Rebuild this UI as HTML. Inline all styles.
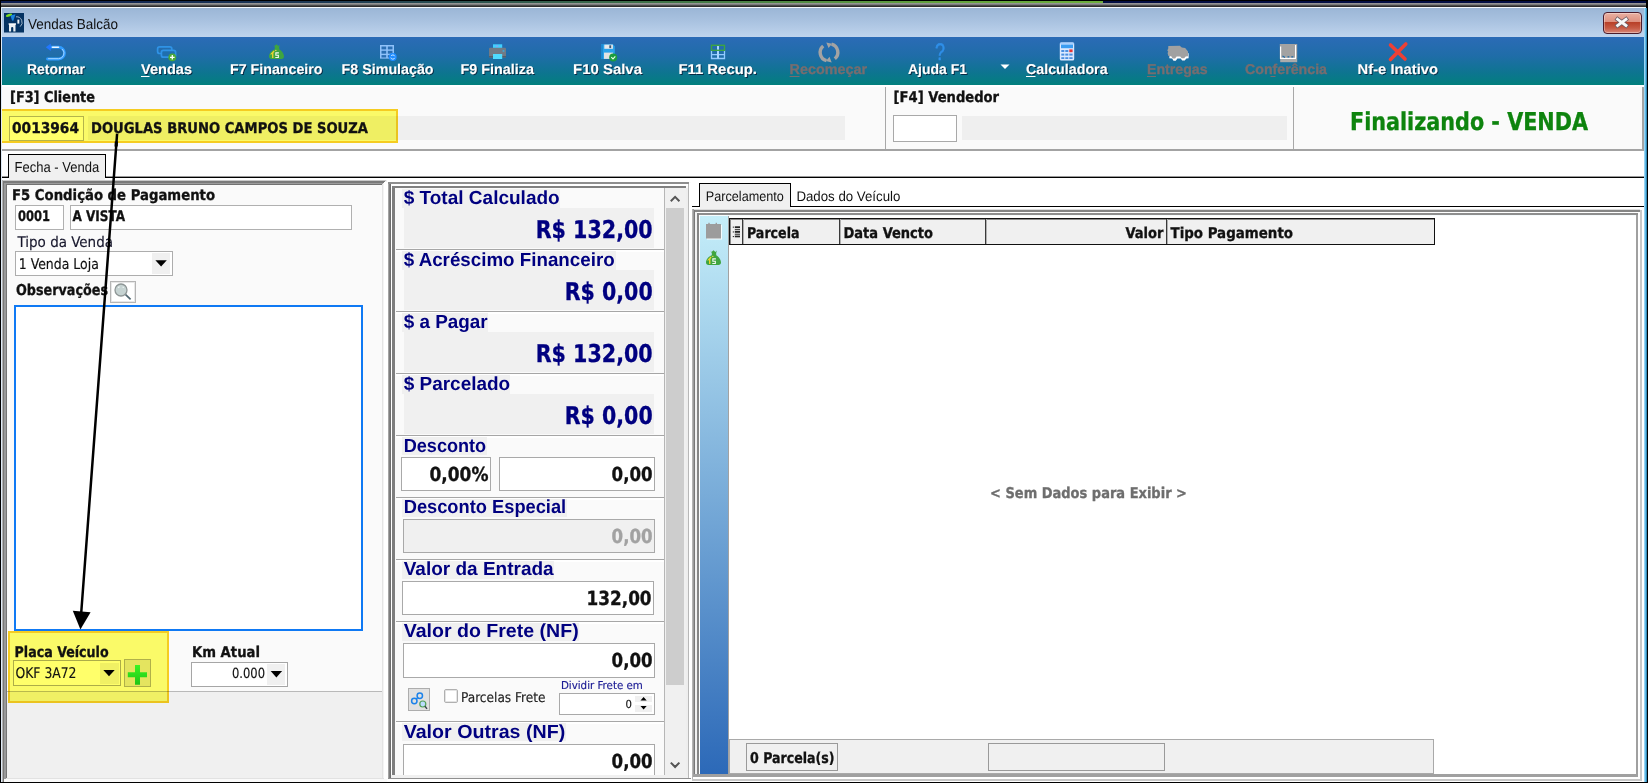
<!DOCTYPE html>
<html lang="pt-BR"><head><meta charset="utf-8"><title>Vendas Balcão</title>
<style>
html,body{margin:0;padding:0;background:#fff;overflow:hidden}
#win{position:relative;width:1648px;height:783px;overflow:hidden;background:#fff;font-family:"Liberation Sans",sans-serif}
#win div{position:absolute;box-sizing:border-box}
#ov{position:absolute;left:0;top:0}
</style></head><body>
<div id="win">
<div style="left:0px;top:0px;width:1648px;height:783px;background:#fff;"></div>
<div style="left:0px;top:0px;width:1648px;height:1px;background:#000;"></div>
<div style="left:0px;top:1px;width:1648px;height:2px;background:#030e44;"></div>
<div style="left:0px;top:1px;width:1103px;height:2px;background:linear-gradient(90deg,#0b1c52,#1d3a55 30%,#3f7448 60%,#62a23d 85%,#6cae3c);"></div>
<div style="left:0px;top:3px;width:1648px;height:1px;background:#949494;"></div>
<div style="left:0px;top:4px;width:1648px;height:1px;background:#7c7c7c;"></div>
<div style="left:0px;top:5px;width:1648px;height:1px;background:#4a4a4a;"></div>
<div style="left:0px;top:6px;width:1648px;height:1px;background:#2e2e2e;"></div>
<div style="left:0px;top:7px;width:1648px;height:1px;background:#f4f8fc;"></div>
<div style="left:2px;top:8px;width:1644px;height:29px;background:linear-gradient(#9bb6d6,#a9c2e0 45%,#bfd4ed);"></div>
<div style="left:2px;top:37px;width:1642px;height:48px;background:linear-gradient(#2b6bb6,#1f6da8 40%,#0d7590 75%,#027f7d);"></div>
<div style="left:0px;top:0px;width:1px;height:783px;background:#000;"></div>
<div style="left:1px;top:7px;width:1px;height:783px;background:#dfeaf6;"></div>
<div style="left:1644px;top:8px;width:1px;height:783px;background:#9ad4f2;"></div>
<div style="left:1645px;top:8px;width:1px;height:783px;background:#5fbbe8;"></div>
<div style="left:1646px;top:8px;width:1px;height:783px;background:#3588b4;"></div>
<div style="left:1647px;top:0px;width:1px;height:783px;background:#000;"></div>
<div style="left:1646px;top:0px;width:2px;height:8px;background:#000;"></div>
<div style="left:1603px;top:12px;width:39px;height:22px;background:linear-gradient(#eab0a2,#dd8f7e 45%,#b83f27 46%,#c65a44 75%,#d9887a);border:1px solid #4b1c2c;border-radius:4px;box-shadow:inset 0 0 0 1px rgba(255,255,255,.35);"></div>
<div style="left:2px;top:85px;width:1642px;height:64px;background:#fafafa;"></div>
<div style="left:2px;top:149px;width:1642px;height:2px;background:#a3a3a3;"></div>
<div style="left:885px;top:86px;width:1px;height:63px;background:#a8a8a8;"></div>
<div style="left:1293px;top:86px;width:1px;height:63px;background:#a8a8a8;"></div>
<div style="left:1642px;top:87px;width:2px;height:62px;background:#a4a4a4;"></div>
<div style="left:2px;top:85px;width:1642px;height:2px;background:#fff;"></div>
<div style="left:9px;top:116px;width:75px;height:25px;background:#fff;border:1px solid #b4b4b4;"></div>
<div style="left:88px;top:116px;width:757px;height:24px;background:#efefef;"></div>
<div style="left:893px;top:115px;width:64px;height:27px;background:#fff;border:1px solid #a9a9a9;"></div>
<div style="left:962px;top:116px;width:325px;height:24px;background:#efefef;"></div>
<div style="left:2px;top:176px;width:1642px;height:1px;background:#9a9a9a;"></div>
<div style="left:2px;top:177px;width:1642px;height:1px;background:#000;"></div>
<div style="left:2px;top:178px;width:1642px;height:604px;background:#fff;"></div>
<div style="left:8px;top:154px;width:98px;height:24px;background:#f0f0f0;border:1px solid #000;border-bottom:none;"></div>
<div style="left:9px;top:178px;width:96px;height:2px;background:#f0f0f0;"></div>
<div style="left:2px;top:180px;width:385px;height:602px;background:#f0f0f0;"></div>
<div style="left:2px;top:180px;width:384px;height:1px;background:#c8c8c8;"></div>
<div style="left:3px;top:181px;width:382px;height:2px;background:#7a7a7a;"></div>
<div style="left:4px;top:183px;width:380px;height:1px;background:#9c9c9c;"></div>
<div style="left:6px;top:184px;width:377px;height:1px;background:#727272;"></div>
<div style="left:2px;top:180px;width:1px;height:602px;background:#b4b4b4;"></div>
<div style="left:3px;top:181px;width:1px;height:601px;background:#787878;"></div>
<div style="left:4px;top:183px;width:2px;height:599px;background:#9a9a9a;"></div>
<div style="left:6px;top:184px;width:1px;height:598px;background:#767676;"></div>
<div style="left:382px;top:184px;width:1px;height:595px;background:#e4e4e4;"></div>
<div style="left:383px;top:183px;width:1px;height:596px;background:#f4f4f4;"></div>
<div style="left:384px;top:182px;width:3px;height:598px;background:#fff;"></div>
<div style="left:6px;top:778px;width:378px;height:1px;background:#e2e2e2;"></div>
<div style="left:4px;top:779px;width:383px;height:3px;background:#fafafa;"></div>
<div style="left:7px;top:185px;width:375px;height:506px;background:#fafafa;"></div>
<div style="left:7px;top:691px;width:375px;height:1px;background:#b9b9b9;"></div>
<div style="left:15px;top:205px;width:49px;height:25px;background:#fff;border:1px solid #b0b0b0;"></div>
<div style="left:70px;top:205px;width:282px;height:25px;background:#fff;border:1px solid #b0b0b0;"></div>
<div style="left:15px;top:251px;width:158px;height:25px;background:#fff;border:1px solid #adadad;"></div>
<div style="left:152px;top:253px;width:18px;height:21px;background:#f0f0f0;"></div>
<div style="left:110px;top:281px;width:26px;height:22px;background:#f0f0f0;border:1px solid #b5b5b5;"></div>
<div style="left:14px;top:305px;width:349px;height:326px;background:#fff;border:2px solid #0f79f4;"></div>
<div style="left:13px;top:660px;width:108px;height:26px;background:#fff;border:1px solid #adadad;"></div>
<div style="left:100px;top:663px;width:19px;height:21px;background:#f0f0f0;"></div>
<div style="left:124px;top:659px;width:27px;height:28px;background:#e4e4e4;border:1px solid #b0b0b0;"></div>
<div style="left:191px;top:662px;width:97px;height:25px;background:#fff;border:1px solid #a6a6a6;"></div>
<div style="left:267px;top:664px;width:18px;height:21px;background:#f0f0f0;"></div>
<div style="left:388px;top:182px;width:303px;height:597px;background:#fafafa;"></div>
<div style="left:388px;top:182px;width:1px;height:597px;background:#a4a4a4;"></div>
<div style="left:389px;top:182px;width:1px;height:597px;background:#7e7e7e;"></div>
<div style="left:390px;top:182px;width:1px;height:596px;background:#6e6e6e;"></div>
<div style="left:388px;top:182px;width:301px;height:2px;background:#8e8e8e;"></div>
<div style="left:688px;top:184px;width:1px;height:594px;background:#b8b8b8;"></div>
<div style="left:689px;top:183px;width:2px;height:596px;background:#fff;"></div>
<div style="left:388px;top:778px;width:303px;height:1px;background:#8f8f8f;"></div>
<div style="left:391px;top:184px;width:297px;height:594px;background:#fff;"></div>
<div style="left:392px;top:186px;width:296px;height:590px;background:#fafafa;"></div>
<div style="left:392px;top:186px;width:3px;height:590px;background:#7e7e7e;"></div>
<div style="left:392px;top:186px;width:294px;height:2px;background:#808080;"></div>
<div style="left:686px;top:188px;width:2px;height:588px;background:#eeeeee;"></div>
<div style="left:391px;top:775px;width:297px;height:3px;background:#f0f0f0;"></div>
<div style="left:665px;top:188px;width:21px;height:587px;background:#f0f0f0;"></div>
<div style="left:666px;top:208px;width:18px;height:477px;background:#cdcdcd;"></div>
<div style="left:396px;top:249px;width:268px;height:1px;background:#a6a6a6;"></div>
<div style="left:396px;top:250px;width:268px;height:2px;background:#fff;"></div>
<div style="left:396px;top:311px;width:268px;height:1px;background:#a6a6a6;"></div>
<div style="left:396px;top:312px;width:268px;height:2px;background:#fff;"></div>
<div style="left:396px;top:373px;width:268px;height:1px;background:#a6a6a6;"></div>
<div style="left:396px;top:374px;width:268px;height:2px;background:#fff;"></div>
<div style="left:396px;top:435px;width:268px;height:1px;background:#a6a6a6;"></div>
<div style="left:396px;top:436px;width:268px;height:2px;background:#fff;"></div>
<div style="left:396px;top:497px;width:268px;height:1px;background:#a6a6a6;"></div>
<div style="left:396px;top:498px;width:268px;height:2px;background:#fff;"></div>
<div style="left:396px;top:559px;width:268px;height:1px;background:#a6a6a6;"></div>
<div style="left:396px;top:560px;width:268px;height:2px;background:#fff;"></div>
<div style="left:396px;top:621px;width:268px;height:1px;background:#a6a6a6;"></div>
<div style="left:396px;top:622px;width:268px;height:2px;background:#fff;"></div>
<div style="left:396px;top:721px;width:268px;height:1px;background:#a6a6a6;"></div>
<div style="left:396px;top:722px;width:268px;height:2px;background:#fff;"></div>
<div style="left:664px;top:188px;width:1px;height:587px;background:#b6b6b6;"></div>
<div style="left:402px;top:189px;width:158px;height:19px;background:#f0f0f0;"></div>
<div style="left:404px;top:208px;width:250px;height:40px;background:#f0f0f0;"></div>
<div style="left:402px;top:251px;width:214px;height:19px;background:#f0f0f0;"></div>
<div style="left:404px;top:270px;width:250px;height:40px;background:#f0f0f0;"></div>
<div style="left:402px;top:313px;width:86px;height:19px;background:#f0f0f0;"></div>
<div style="left:404px;top:332px;width:250px;height:40px;background:#f0f0f0;"></div>
<div style="left:402px;top:375px;width:108px;height:19px;background:#f0f0f0;"></div>
<div style="left:404px;top:394px;width:250px;height:40px;background:#f0f0f0;"></div>
<div style="left:402px;top:437px;width:85px;height:18px;background:#f0f0f0;"></div>
<div style="left:402px;top:499px;width:165px;height:18px;background:#f0f0f0;"></div>
<div style="left:402px;top:561px;width:152px;height:18px;background:#f0f0f0;"></div>
<div style="left:402px;top:623px;width:177px;height:18px;background:#f0f0f0;"></div>
<div style="left:402px;top:723px;width:164px;height:18px;background:#f0f0f0;"></div>
<div style="left:401px;top:457px;width:90px;height:34px;background:#fff;border:1px solid #a9a9a9;"></div>
<div style="left:499px;top:457px;width:156px;height:34px;background:#fff;border:1px solid #a9a9a9;"></div>
<div style="left:403px;top:519px;width:252px;height:34px;background:#f0f0f0;border:1px solid #a9a9a9;"></div>
<div style="left:402px;top:581px;width:252px;height:34px;background:#fff;border:1px solid #a9a9a9;"></div>
<div style="left:403px;top:643px;width:252px;height:35px;background:#fff;border:1px solid #a9a9a9;"></div>
<div style="left:403px;top:744px;width:252px;height:31px;background:#fff;border:1px solid #a9a9a9;border-bottom:none;"></div>
<div style="left:408px;top:688px;width:22px;height:23px;background:#e1e1e1;border:1px solid #adadad;"></div>
<div style="left:444px;top:689px;width:14px;height:14px;background:#fff;border:1px solid #b0b0b0;border-radius:2px;box-shadow:inset 0 0 0 1px #e4e4e4;"></div>
<div style="left:559px;top:693px;width:96px;height:22px;background:#fff;border:1px solid #a9a9a9;"></div>
<div style="left:635px;top:696px;width:17px;height:6px;background:#f0f0f0;"></div>
<div style="left:635px;top:705px;width:17px;height:7px;background:#f0f0f0;"></div>
<div style="left:692px;top:178px;width:952px;height:604px;background:#fff;"></div>
<div style="left:692px;top:206px;width:952px;height:1px;background:#000;"></div>
<div style="left:699px;top:183px;width:92px;height:24px;background:#f0f0f0;border:1px solid #000;border-bottom:none;"></div>
<div style="left:692px;top:207px;width:950px;height:2px;background:#fff;"></div>
<div style="left:700px;top:207px;width:91px;height:3px;background:#f0f0f0;"></div>
<div style="left:692px;top:209px;width:948px;height:1px;background:#dcdcdc;"></div>
<div style="left:694px;top:210px;width:946px;height:2px;background:#858585;"></div>
<div style="left:695px;top:212px;width:943px;height:1px;background:#fff;"></div>
<div style="left:697px;top:213px;width:941px;height:2px;background:#8e8e8e;"></div>
<div style="left:699px;top:215px;width:937px;height:1px;background:#f6fbfd;"></div>
<div style="left:692px;top:209px;width:1px;height:570px;background:#b4b4b4;"></div>
<div style="left:693px;top:209px;width:1px;height:570px;background:#9c9c9c;"></div>
<div style="left:694px;top:210px;width:1px;height:568px;background:#787878;"></div>
<div style="left:695px;top:212px;width:2px;height:565px;background:#f2f2f2;"></div>
<div style="left:697px;top:213px;width:2px;height:563px;background:#868686;"></div>
<div style="left:699px;top:215px;width:1px;height:560px;background:#fbfdfe;"></div>
<div style="left:1636px;top:215px;width:2px;height:562px;background:#a0a0a0;"></div>
<div style="left:1638px;top:212px;width:2px;height:567px;background:#fff;"></div>
<div style="left:1640px;top:210px;width:2px;height:571px;background:#c8c8c8;"></div>
<div style="left:1642px;top:207px;width:2px;height:575px;background:#fff;"></div>
<div style="left:700px;top:216px;width:28px;height:558px;background:linear-gradient(#c5eef9,#2c69b8);"></div>
<div style="left:728px;top:216px;width:1px;height:558px;background:#a2a2a2;"></div>
<div style="left:729px;top:218px;width:706px;height:27px;background:#f0f0f0;border:1px solid #111;box-shadow:inset 1px 1px 0 #8a8a8a;"></div>
<div style="left:742px;top:219px;width:1px;height:25px;background:#3a3a3a;"></div>
<div style="left:743px;top:219px;width:1px;height:25px;background:#b0b0b0;"></div>
<div style="left:839px;top:219px;width:1px;height:25px;background:#3a3a3a;"></div>
<div style="left:840px;top:219px;width:1px;height:25px;background:#b0b0b0;"></div>
<div style="left:985px;top:219px;width:1px;height:25px;background:#3a3a3a;"></div>
<div style="left:986px;top:219px;width:1px;height:25px;background:#b0b0b0;"></div>
<div style="left:1166px;top:219px;width:1px;height:25px;background:#3a3a3a;"></div>
<div style="left:1167px;top:219px;width:1px;height:25px;background:#b0b0b0;"></div>
<div style="left:729px;top:739px;width:705px;height:35px;background:#f0f0f0;border:1px solid #a9a9a9;"></div>
<div style="left:746px;top:743px;width:92px;height:28px;background:#f0f0f0;border:1px solid #9a9a9a;"></div>
<div style="left:988px;top:743px;width:177px;height:28px;background:#f0f0f0;border:1px solid #9a9a9a;"></div>
<div style="left:693px;top:774px;width:945px;height:3px;background:#a0a0a0;"></div>
<div style="left:693px;top:777px;width:947px;height:2px;background:#fff;"></div>
<div style="left:692px;top:779px;width:950px;height:2px;background:#c8c8c8;"></div>
<div style="left:692px;top:781px;width:952px;height:1px;background:#fff;"></div>
<div style="left:0px;top:782px;width:1648px;height:1px;background:#000;"></div>
<div style="left:2px;top:109px;width:396px;height:34px;background:#ffff6a;mix-blend-mode:multiply;border:2px solid #fad021;border-left:none;"></div>
<div style="left:8px;top:631px;width:161px;height:72px;background:#ffff6a;mix-blend-mode:multiply;border:2px solid #fad021;"></div>
<svg id="ov" width="1648" height="783" viewBox="0 0 1648 783" text-rendering="geometricPrecision">
<text x="28" y="28.5" font-family='"Liberation Sans",sans-serif' font-size="14.4" fill="#101010" textLength="90" lengthAdjust="spacingAndGlyphs" >Vendas Balcão</text>
<text x="28" y="75.2" font-family='"Liberation Sans",sans-serif' font-size="14.2" fill="#0a2a44" font-weight="bold" textLength="58" lengthAdjust="spacingAndGlyphs" >Retornar</text>
<text x="27" y="74.2" font-family='"Liberation Sans",sans-serif' font-size="14.2" fill="#fff" font-weight="bold" textLength="58" lengthAdjust="spacingAndGlyphs" stroke="#fff" stroke-width="0.12">Retornar</text>
<text x="142" y="75.2" font-family='"Liberation Sans",sans-serif' font-size="14.2" fill="#0a2a44" font-weight="bold" textLength="51" lengthAdjust="spacingAndGlyphs" >Vendas</text>
<text x="141" y="74.2" font-family='"Liberation Sans",sans-serif' font-size="14.2" fill="#fff" font-weight="bold" textLength="51" lengthAdjust="spacingAndGlyphs" stroke="#fff" stroke-width="0.12">Vendas</text>
<text x="231" y="75.2" font-family='"Liberation Sans",sans-serif' font-size="14.2" fill="#0a2a44" font-weight="bold" textLength="92.5" lengthAdjust="spacingAndGlyphs" >F7 Financeiro</text>
<text x="230" y="74.2" font-family='"Liberation Sans",sans-serif' font-size="14.2" fill="#fff" font-weight="bold" textLength="92.5" lengthAdjust="spacingAndGlyphs" stroke="#fff" stroke-width="0.12">F7 Financeiro</text>
<text x="342.6" y="75.2" font-family='"Liberation Sans",sans-serif' font-size="14.2" fill="#0a2a44" font-weight="bold" textLength="92.0" lengthAdjust="spacingAndGlyphs" >F8 Simulação</text>
<text x="341.6" y="74.2" font-family='"Liberation Sans",sans-serif' font-size="14.2" fill="#fff" font-weight="bold" textLength="92.0" lengthAdjust="spacingAndGlyphs" stroke="#fff" stroke-width="0.12">F8 Simulação</text>
<text x="461.4" y="75.2" font-family='"Liberation Sans",sans-serif' font-size="14.2" fill="#0a2a44" font-weight="bold" textLength="73.6" lengthAdjust="spacingAndGlyphs" >F9 Finaliza</text>
<text x="460.4" y="74.2" font-family='"Liberation Sans",sans-serif' font-size="14.2" fill="#fff" font-weight="bold" textLength="73.6" lengthAdjust="spacingAndGlyphs" stroke="#fff" stroke-width="0.12">F9 Finaliza</text>
<text x="574" y="75.2" font-family='"Liberation Sans",sans-serif' font-size="14.2" fill="#0a2a44" font-weight="bold" textLength="69" lengthAdjust="spacingAndGlyphs" >F10 Salva</text>
<text x="573" y="74.2" font-family='"Liberation Sans",sans-serif' font-size="14.2" fill="#fff" font-weight="bold" textLength="69" lengthAdjust="spacingAndGlyphs" stroke="#fff" stroke-width="0.12">F10 Salva</text>
<text x="679.4" y="75.2" font-family='"Liberation Sans",sans-serif' font-size="14.2" fill="#0a2a44" font-weight="bold" textLength="78.6" lengthAdjust="spacingAndGlyphs" >F11 Recup.</text>
<text x="678.4" y="74.2" font-family='"Liberation Sans",sans-serif' font-size="14.2" fill="#fff" font-weight="bold" textLength="78.6" lengthAdjust="spacingAndGlyphs" stroke="#fff" stroke-width="0.12">F11 Recup.</text>
<text x="789.6" y="74.2" font-family='"Liberation Sans",sans-serif' font-size="14.2" fill="#776d6f" font-weight="bold" textLength="77.4" lengthAdjust="spacingAndGlyphs" stroke="#776d6f" stroke-width="0.3">Recomeçar</text>
<text x="909" y="75.2" font-family='"Liberation Sans",sans-serif' font-size="14.2" fill="#0a2a44" font-weight="bold" textLength="59" lengthAdjust="spacingAndGlyphs" >Ajuda F1</text>
<text x="908" y="74.2" font-family='"Liberation Sans",sans-serif' font-size="14.2" fill="#fff" font-weight="bold" textLength="59" lengthAdjust="spacingAndGlyphs" stroke="#fff" stroke-width="0.12">Ajuda F1</text>
<text x="1027" y="75.2" font-family='"Liberation Sans",sans-serif' font-size="14.2" fill="#0a2a44" font-weight="bold" textLength="81.6" lengthAdjust="spacingAndGlyphs" >Calculadora</text>
<text x="1026" y="74.2" font-family='"Liberation Sans",sans-serif' font-size="14.2" fill="#fff" font-weight="bold" textLength="81.6" lengthAdjust="spacingAndGlyphs" stroke="#fff" stroke-width="0.12">Calculadora</text>
<text x="1147" y="74.2" font-family='"Liberation Sans",sans-serif' font-size="14.2" fill="#776d6f" font-weight="bold" textLength="60.6" lengthAdjust="spacingAndGlyphs" stroke="#776d6f" stroke-width="0.3">Entregas</text>
<text x="1245" y="74.2" font-family='"Liberation Sans",sans-serif' font-size="14.2" fill="#776d6f" font-weight="bold" textLength="82" lengthAdjust="spacingAndGlyphs" stroke="#776d6f" stroke-width="0.3">Conferência</text>
<text x="1358.6" y="75.2" font-family='"Liberation Sans",sans-serif' font-size="14.2" fill="#0a2a44" font-weight="bold" textLength="80.4" lengthAdjust="spacingAndGlyphs" >Nf-e Inativo</text>
<text x="1357.6" y="74.2" font-family='"Liberation Sans",sans-serif' font-size="14.2" fill="#fff" font-weight="bold" textLength="80.4" lengthAdjust="spacingAndGlyphs" stroke="#fff" stroke-width="0.12">Nf-e Inativo</text>
<rect x="141" y="76" width="8.5" height="1" fill="#fff"/>
<rect x="789.6" y="76" width="9.899999999999977" height="1" fill="#776d6f"/>
<rect x="1026" y="76" width="9.5" height="1" fill="#fff"/>
<rect x="1147" y="76" width="9" height="1" fill="#776d6f"/>
<rect x="1270.5" y="76" width="5.0" height="1" fill="#776d6f"/>
<path d="M1000.5 64.5h9l-4.5 4.5z" fill="#fff"/>
<text x="10" y="101.8" font-family='"DejaVu Sans Condensed","DejaVu Sans",sans-serif' font-size="14.8" fill="#111" font-weight="bold" textLength="85" lengthAdjust="spacingAndGlyphs" stroke="#111" stroke-width="0.3" >[F3] Cliente</text>
<text x="12" y="132.9" font-family='"DejaVu Sans Condensed","DejaVu Sans",sans-serif' font-size="14.8" fill="#111" font-weight="bold" textLength="67" lengthAdjust="spacingAndGlyphs" stroke="#111" stroke-width="0.3" >0013964</text>
<text x="91" y="132.9" font-family='"DejaVu Sans Condensed","DejaVu Sans",sans-serif' font-size="14.8" fill="#111" font-weight="bold" textLength="277" lengthAdjust="spacingAndGlyphs" stroke="#111" stroke-width="0.3" >DOUGLAS BRUNO CAMPOS DE SOUZA</text>
<text x="893.6" y="101.8" font-family='"DejaVu Sans Condensed","DejaVu Sans",sans-serif' font-size="14.8" fill="#111" font-weight="bold" textLength="105.5" lengthAdjust="spacingAndGlyphs" stroke="#111" stroke-width="0.3" >[F4] Vendedor</text>
<text x="1350" y="129.5" font-family='"DejaVu Sans Condensed","DejaVu Sans",sans-serif' font-size="24.6" fill="#0e840e" font-weight="bold" textLength="238" lengthAdjust="spacingAndGlyphs" stroke="#0e840e" stroke-width="0.3" >Finalizando - VENDA</text>
<text x="14.6" y="171.5" font-family='"Liberation Sans",sans-serif' font-size="14.5" fill="#111" textLength="84.6" lengthAdjust="spacingAndGlyphs" >Fecha - Venda</text>
<text x="12" y="200" font-family='"DejaVu Sans Condensed","DejaVu Sans",sans-serif' font-size="14.8" fill="#111" font-weight="bold" textLength="203" lengthAdjust="spacingAndGlyphs" stroke="#111" stroke-width="0.3" >F5 Condição de Pagamento</text>
<text x="18" y="221.4" font-family='"DejaVu Sans Condensed","DejaVu Sans",sans-serif' font-size="14.6" fill="#111" font-weight="bold" textLength="32" lengthAdjust="spacingAndGlyphs" stroke="#111" stroke-width="0.3" >0001</text>
<text x="72.5" y="221.4" font-family='"DejaVu Sans Condensed","DejaVu Sans",sans-serif' font-size="14.6" fill="#111" font-weight="bold" textLength="52.5" lengthAdjust="spacingAndGlyphs" stroke="#111" stroke-width="0.3" >A VISTA</text>
<text x="17.5" y="247" font-family='"DejaVu Sans Condensed","DejaVu Sans",sans-serif' font-size="14.8" fill="#17172c" textLength="95.5" lengthAdjust="spacingAndGlyphs" stroke="#17172c" stroke-width="0.15" >Tipo da Venda</text>
<text x="18.8" y="268.8" font-family='"DejaVu Sans Condensed","DejaVu Sans",sans-serif' font-size="14.6" fill="#111" textLength="80" lengthAdjust="spacingAndGlyphs" stroke="#111" stroke-width="0.15" >1 Venda Loja</text>
<text x="16" y="295.2" font-family='"DejaVu Sans Condensed","DejaVu Sans",sans-serif' font-size="15" fill="#111" font-weight="bold" textLength="92" lengthAdjust="spacingAndGlyphs" stroke="#111" stroke-width="0.3" >Observações</text>
<text x="14.6" y="656.7" font-family='"DejaVu Sans Condensed","DejaVu Sans",sans-serif' font-size="14.8" fill="#111" font-weight="bold" textLength="94" lengthAdjust="spacingAndGlyphs" stroke="#111" stroke-width="0.3" >Placa Veículo</text>
<text x="15.5" y="677.6" font-family='"DejaVu Sans Condensed","DejaVu Sans",sans-serif' font-size="14.8" fill="#111" textLength="61" lengthAdjust="spacingAndGlyphs" stroke="#111" stroke-width="0.15" >OKF 3A72</text>
<text x="192" y="656.7" font-family='"DejaVu Sans Condensed","DejaVu Sans",sans-serif' font-size="14.8" fill="#111" font-weight="bold" textLength="68" lengthAdjust="spacingAndGlyphs" stroke="#111" stroke-width="0.3" >Km Atual</text>
<text x="232" y="678.3" font-family='"DejaVu Sans Condensed","DejaVu Sans",sans-serif' font-size="13.9" fill="#111" textLength="33" lengthAdjust="spacingAndGlyphs" stroke="#111" stroke-width="0.15" >0.000</text>
<path d="M155.4 260.2h11.4l-5.7 6.300z" fill="#000"/>
<path d="M103.3 669.9h11.4l-5.7 6.300z" fill="#000"/>
<path d="M270.7 671.1h11.4l-5.7 6.300z" fill="#000"/>
<text x="403.7" y="204.3" font-family='"Liberation Sans",sans-serif' font-size="19" fill="#000080" font-weight="bold" textLength="156" lengthAdjust="spacingAndGlyphs" >$ Total Calculado</text>
<text x="403.7" y="266.3" font-family='"Liberation Sans",sans-serif' font-size="19" fill="#000080" font-weight="bold" textLength="211" lengthAdjust="spacingAndGlyphs" >$ Acréscimo Financeiro</text>
<text x="403.7" y="328.3" font-family='"Liberation Sans",sans-serif' font-size="19" fill="#000080" font-weight="bold" textLength="84" lengthAdjust="spacingAndGlyphs" >$ a Pagar</text>
<text x="403.7" y="390.3" font-family='"Liberation Sans",sans-serif' font-size="19" fill="#000080" font-weight="bold" textLength="106.5" lengthAdjust="spacingAndGlyphs" >$ Parcelado</text>
<text x="403.7" y="451.8" font-family='"Liberation Sans",sans-serif' font-size="19" fill="#000080" font-weight="bold" textLength="82.5" lengthAdjust="spacingAndGlyphs" >Desconto</text>
<text x="403.7" y="513.3" font-family='"Liberation Sans",sans-serif' font-size="19" fill="#000080" font-weight="bold" textLength="162.5" lengthAdjust="spacingAndGlyphs" >Desconto Especial</text>
<text x="403.7" y="575.3" font-family='"Liberation Sans",sans-serif' font-size="19" fill="#000080" font-weight="bold" textLength="150" lengthAdjust="spacingAndGlyphs" >Valor da Entrada</text>
<text x="403.7" y="637.3" font-family='"Liberation Sans",sans-serif' font-size="19" fill="#000080" font-weight="bold" textLength="175" lengthAdjust="spacingAndGlyphs" >Valor do Frete (NF)</text>
<text x="403.7" y="737.8" font-family='"Liberation Sans",sans-serif' font-size="19" fill="#000080" font-weight="bold" textLength="161.5" lengthAdjust="spacingAndGlyphs" >Valor Outras (NF)</text>
<text x="652.7" y="237.7" font-family='"DejaVu Sans Condensed","DejaVu Sans",sans-serif' font-size="24.5" fill="#000080" font-weight="bold" text-anchor="end" textLength="117" lengthAdjust="spacingAndGlyphs" stroke="#000080" stroke-width="0.3" >R$ 132,00</text>
<text x="652.7" y="299.7" font-family='"DejaVu Sans Condensed","DejaVu Sans",sans-serif' font-size="24.5" fill="#000080" font-weight="bold" text-anchor="end" textLength="88" lengthAdjust="spacingAndGlyphs" stroke="#000080" stroke-width="0.3" >R$ 0,00</text>
<text x="652.7" y="361.7" font-family='"DejaVu Sans Condensed","DejaVu Sans",sans-serif' font-size="24.5" fill="#000080" font-weight="bold" text-anchor="end" textLength="117" lengthAdjust="spacingAndGlyphs" stroke="#000080" stroke-width="0.3" >R$ 132,00</text>
<text x="652.7" y="423.7" font-family='"DejaVu Sans Condensed","DejaVu Sans",sans-serif' font-size="24.5" fill="#000080" font-weight="bold" text-anchor="end" textLength="88" lengthAdjust="spacingAndGlyphs" stroke="#000080" stroke-width="0.3" >R$ 0,00</text>
<text x="488.5" y="480.5" font-family='"DejaVu Sans Condensed","DejaVu Sans",sans-serif' font-size="19.5" fill="#111" font-weight="bold" text-anchor="end" textLength="59" lengthAdjust="spacingAndGlyphs" stroke="#111" stroke-width="0.3" >0,00%</text>
<text x="652.6" y="480.5" font-family='"DejaVu Sans Condensed","DejaVu Sans",sans-serif' font-size="19.5" fill="#111" font-weight="bold" text-anchor="end" textLength="41" lengthAdjust="spacingAndGlyphs" stroke="#111" stroke-width="0.3" >0,00</text>
<text x="652.6" y="542.5" font-family='"DejaVu Sans Condensed","DejaVu Sans",sans-serif' font-size="19.5" fill="#a2a2a2" font-weight="bold" text-anchor="end" textLength="41" lengthAdjust="spacingAndGlyphs" stroke="#a2a2a2" stroke-width="0.3" >0,00</text>
<text x="651.6" y="604.6" font-family='"DejaVu Sans Condensed","DejaVu Sans",sans-serif' font-size="19.5" fill="#111" font-weight="bold" text-anchor="end" textLength="65" lengthAdjust="spacingAndGlyphs" stroke="#111" stroke-width="0.3" >132,00</text>
<text x="652.6" y="666.6" font-family='"DejaVu Sans Condensed","DejaVu Sans",sans-serif' font-size="19.5" fill="#111" font-weight="bold" text-anchor="end" textLength="41" lengthAdjust="spacingAndGlyphs" stroke="#111" stroke-width="0.3" >0,00</text>
<text x="652.6" y="767.6" font-family='"DejaVu Sans Condensed","DejaVu Sans",sans-serif' font-size="19.5" fill="#111" font-weight="bold" text-anchor="end" textLength="41" lengthAdjust="spacingAndGlyphs" stroke="#111" stroke-width="0.3" >0,00</text>
<text x="461" y="701.7" font-family='"DejaVu Sans Condensed","DejaVu Sans",sans-serif' font-size="13.5" fill="#222" textLength="84.5" lengthAdjust="spacingAndGlyphs" stroke="#222" stroke-width="0.15" >Parcelas Frete</text>
<text x="560.9" y="689.4" font-family='"DejaVu Sans Condensed","DejaVu Sans",sans-serif' font-size="10.9" fill="#1a1a94" textLength="82" lengthAdjust="spacingAndGlyphs" stroke="#1a1a94" stroke-width="0.15" >Dividir Frete em</text>
<text x="632" y="707.5" font-family='"DejaVu Sans Condensed","DejaVu Sans",sans-serif' font-size="11.2" fill="#111" text-anchor="end" stroke="#111" stroke-width="0.15" >0</text>
<path d="M640.500 700.500h6.200l-3.100-3.600zM640.500 706h6.200l-3.100 3.600z" fill="#000"/>
<path d="M670.800 201.300l4.300-4.400 4.300 4.400M670.800 762.600l4.300 4.400 4.300-4.400" fill="none" stroke="#555" stroke-width="2"/>
<text x="705.8" y="201" font-family='"Liberation Sans",sans-serif' font-size="14" fill="#111" textLength="78" lengthAdjust="spacingAndGlyphs" >Parcelamento</text>
<text x="796.4" y="201" font-family='"Liberation Sans",sans-serif' font-size="14" fill="#111" textLength="104" lengthAdjust="spacingAndGlyphs" >Dados do Veículo</text>
<text x="747" y="238.3" font-family='"DejaVu Sans Condensed","DejaVu Sans",sans-serif' font-size="14.9" fill="#111" font-weight="bold" textLength="52.5" lengthAdjust="spacingAndGlyphs" stroke="#111" stroke-width="0.3" >Parcela</text>
<text x="843.5" y="238.3" font-family='"DejaVu Sans Condensed","DejaVu Sans",sans-serif' font-size="14.9" fill="#111" font-weight="bold" textLength="89.5" lengthAdjust="spacingAndGlyphs" stroke="#111" stroke-width="0.3" >Data Vencto</text>
<text x="1163.5" y="238.3" font-family='"DejaVu Sans Condensed","DejaVu Sans",sans-serif' font-size="14.9" fill="#111" font-weight="bold" text-anchor="end" textLength="38" lengthAdjust="spacingAndGlyphs" stroke="#111" stroke-width="0.3" >Valor</text>
<text x="1170.5" y="238.3" font-family='"DejaVu Sans Condensed","DejaVu Sans",sans-serif' font-size="14.9" fill="#111" font-weight="bold" textLength="122.5" lengthAdjust="spacingAndGlyphs" stroke="#111" stroke-width="0.3" >Tipo Pagamento</text>
<text x="990" y="498.4" font-family='"DejaVu Sans Condensed","DejaVu Sans",sans-serif' font-size="14.8" fill="#6e6e6e" font-weight="bold" textLength="197" lengthAdjust="spacingAndGlyphs" stroke="#6e6e6e" stroke-width="0.3" >&lt; Sem Dados para Exibir &gt;</text>
<text x="750" y="763" font-family='"DejaVu Sans Condensed","DejaVu Sans",sans-serif' font-size="14.9" fill="#111" font-weight="bold" textLength="84.5" lengthAdjust="spacingAndGlyphs" stroke="#111" stroke-width="0.3" >0 Parcela(s)</text>
<g><rect x="4" y="13" width="20" height="19.5" fill="#053363"/><ellipse cx="9" cy="15.3" rx="3.3" ry="1.3" fill="#7ddc1e" transform="rotate(-18 9 15.3)"/><path d="M10.5 15.5l5-1.2-2.2 6.5-1.3-.2z" fill="#1b83e0"/><path d="M9 24h6.5v7.5h-2.2v-3.4a1.1 1.1 0 0 0-2.2 0v3.4H9z" fill="#e9eef2"/><rect x="8.6" y="23.3" width="7.4" height="1.4" fill="#fff"/><path d="M16 16.8a5.6 5.6 0 0 1 4.2 9.8" fill="none" stroke="#9fb4c8" stroke-width="1"/><rect x="17.4" y="19.6" width="1.9" height="4" fill="#f2f4f6"/></g>
<path d="M1617.6 19.3l8.4 6.2M1626 19.3l-8.4 6.2" stroke="#6a5a62" stroke-width="4.4" stroke-linecap="square"/><path d="M1617.6 19.3l8.4 6.2M1626 19.3l-8.4 6.2" stroke="#f7f7f7" stroke-width="2.8" stroke-linecap="square"/>
<g fill="none" stroke-linecap="round"><path d="M47.5 59H58.6a5.9 5.9 0 0 0 0-11.800H50" stroke="#2f9bff" stroke-width="2.800"/><path d="M48.500 58.700H58.600a5.600 5.600 0 0 0 4-9.400" stroke="#a6d6ff" stroke-width="1"/><path d="M52.500 47.200H58.500" stroke="#eef7ff" stroke-width="1.600"/></g><path d="M45.800 47.300l5-3.800v7.400z" fill="#2277ff"/>
<g fill="none" stroke="#2f93e6" stroke-width="1.7"><rect x="157.6" y="46.9" width="14.2" height="6.6" rx="2"/><rect x="161.4" y="50.4" width="14.2" height="6.8" rx="2" fill="#1f6fae"/></g><circle cx="172.3" cy="57.3" r="3.9" fill="#49a83a"/><path d="M170 57.3h4.6M172.3 55v4.6" stroke="#fff" stroke-width="1.3"/>
<g transform="translate(269 44.3)"><path d="M4.200 .300L5.600 1.800 7.500 0 9.400 1.800 10.800 .300 10.200 2.600V5C12.500 6.200 15 9.500 15 12.200 15 13.800 14 14.600 12.500 14.600H2.500C1 14.600 0 13.800 0 12.200 0 9.500 2.500 6.200 5.800 5V2.600z" fill="#3fa540"/><path d="M1 10.200l3.600-4 1 .900-1.200 1.500v5H3V10z" fill="#e6d232"/><path d="M6.300 8h3.600v1.100H7.400v1.300h2.500v3.300H6.300v-1.100h2.500v-1.100H6.300z" fill="#f4f8f0"/><rect x="5.900" y="5.600" width="1.600" height="1.100" fill="#d8d04a"/></g>
<g><rect x="380" y="45" width="14" height="13.600" fill="#8fc2fa"/><g fill="#2a6fb4"><rect x="381.500" y="46.500" width="4.700" height="2.900"/><rect x="387.800" y="46.500" width="4.700" height="2.900"/><rect x="381.500" y="50.800" width="4.700" height="2.900"/><rect x="387.800" y="50.800" width="4.700" height="2.900"/><rect x="381.500" y="55.100" width="4.700" height="2.400"/><rect x="387.800" y="55.100" width="4.700" height="2.400"/></g><circle cx="392.800" cy="57" r="3.900" fill="#1e8cff"/><path d="M390.800 57.600a2.100 2.100 0 0 0 4 .200M394.800 56.300a2.100 2.100 0 0 0-3.800-.300" stroke="#d8ecff" stroke-width=".9" fill="none"/></g>
<g><rect x="493" y="44.300" width="9.200" height="4" fill="#3fd0ff"/><rect x="495.800" y="45.600" width="2.600" height=".9" fill="#b58cf0"/><rect x="489" y="47.800" width="17" height="9.600" rx="1" fill="#717b86"/><rect x="489" y="56" width="17" height="1.400" fill="#565f69"/><rect x="493" y="54" width="9.200" height="5" fill="#4fdcff"/><rect x="502.600" y="50.300" width="1.800" height="1.300" fill="#38b8ec"/></g>
<g><path d="M601 44.300h11.800l2 2v12.600H601z" fill="#2aa2ea"/><rect x="601" y="44.300" width="2" height="14.600" fill="#1c8ad2"/><rect x="604.300" y="44.600" width="8.600" height="4.200" fill="#e6e9ec"/><rect x="609.300" y="45.300" width="1.900" height="2.800" fill="#3d5a78"/><rect x="604" y="52.600" width="9" height="6.300" fill="#e2e2e2"/><circle cx="613.200" cy="57.400" r="4" fill="#1b9c3e"/><path d="M611.300 57.200l1.700 1.700 2.300-2.600" stroke="#e8ffe8" stroke-width="1.100" fill="none"/></g>
<g fill="none"><path d="M711.500 50.500v8h13v-8M711.500 54.600h13" stroke="#92caff" stroke-width="1.300"/><path d="M718 45.500v13" stroke="#a8d6ff" stroke-width="2"/><rect x="711.500" y="45.300" width="13" height="5" stroke="#3da443" stroke-width="1.400"/></g>
<g fill="none" stroke="#a3a3a3" stroke-width="3.400"><path d="M831.500 44.200a8.400 8.400 0 0 1 3.300 14.600"/><path d="M826.500 60.600a8.400 8.400 0 0 1-3.300-14.600"/></g><path d="M826.300 42.400l5.800 1.400-3.600 4.200zM831.700 62.400l-5.800-1.400 3.600-4.200z" fill="#a3a3a3"/>
<text x="940" y="60.300" font-family='"Liberation Sans",sans-serif' font-size="24" fill="#2f8fe8" stroke="#2f8fe8" stroke-width=".500" text-anchor="middle" textLength="10" lengthAdjust="spacingAndGlyphs">?</text>
<g><rect x="1059.800" y="42.600" width="14.400" height="18" rx="1.500" fill="#dbe9ff"/><rect x="1059.800" y="42.600" width="14.400" height="2" rx="1" fill="#a8d0ff"/><rect x="1061" y="44.600" width="12" height="3.600" fill="#3a9df2"/><g fill="#4b8fe0"><rect x="1061.300" y="50" width="3" height="2"/><rect x="1065.300" y="50" width="3" height="2"/><rect x="1061.300" y="53.600" width="3" height="2"/><rect x="1065.300" y="53.600" width="3" height="2"/><rect x="1069.300" y="53.600" width="3.300" height="2"/><rect x="1061.300" y="57.200" width="3" height="1.800"/><rect x="1065.300" y="57.200" width="3" height="1.800"/><rect x="1069.300" y="57.200" width="3.300" height="1.800"/></g><rect x="1069.300" y="49.400" width="3.300" height="2.800" fill="#e63535"/></g>
<g><path d="M1170 47.500l10.200-.2 2.200 1.800 3.200.6 2.700 3.200v4.700l-2.200.2-1.700 2h-2.500l-1.500-2-3.300.200-1.600 2.200h-2.300l-1.400-2.400-2.800-.2z" fill="#fff" transform="translate(.300 .600)"/><path d="M1168.300 46l11.500-.2 2 1.800 3.400.5 2.800 3.300v4.800l-2.300.2-1.500 1.800h-2.500l-1.500-1.800-3.600.2-1.500 2h-2.400l-1.500-2.400-2.800-.2-.8-3 .6-1.300-.9-1.500.9-1.400z" fill="#a1a1a1"/></g>
<g><rect x="1279.800" y="44" width="17.400" height="14.800" fill="#a2a2a2"/><path d="M1280.600 46.500V58.300H1295.600V45" fill="none" stroke="#fff" stroke-width="1.200"/><rect x="1280.200" y="59" width="17" height="3.200" fill="#ababab"/><path d="M1282.500 56l2.500 1.500M1287.500 56.800h1.800M1291.300 56.800h2" stroke="#1d6aa8" stroke-width="1.200"/></g>
<path d="M1390.500 45l14.500 14M1405.800 44l-15.300 15.500" stroke="#ee4035" stroke-width="3.600" stroke-linecap="round"/>
<rect x="111.500" y="282.500" width="23" height="19" fill="#fff" stroke="#e7e7e7"/><circle cx="121" cy="290" r="6" fill="#c6d3d2" stroke="#8e9696" stroke-width="1.300"/><path d="M118 287.600l1.600-.8M122.500 287l1.400.5" stroke="#eef4f4" stroke-width="1.200"/><path d="M125.600 294.600l5 4.800" stroke="#4f6670" stroke-width="1.700"/>
<defs><linearGradient id="gp" x1="0" y1="0" x2="0" y2="1"><stop offset="0" stop-color="#3af522"/><stop offset="1" stop-color="#1fc416"/></linearGradient></defs><path d="M135 665h5v7.300h7v5h-7v7.500h-5v-7.500h-7.200v-5H135z" fill="url(#gp)"/>
<g fill="none"><circle cx="419.800" cy="695.800" r="2.700" stroke="#1c82ea" stroke-width="1.500"/><circle cx="414.300" cy="701" r="2.700" stroke="#1c82ea" stroke-width="1.500"/><path d="M416.300 699l1.600-1.500" stroke="#1c82ea" stroke-width="1.400"/><circle cx="422.800" cy="704" r="3" fill="#bcdcff" stroke="#53a05a" stroke-width="1.200"/><path d="M425 706.300l2 2.600" stroke="#3a4450" stroke-width="1.400"/></g>
<rect x="707" y="225" width="15" height="14.500" fill="#f4fbfd"/><rect x="706" y="224" width="15" height="14.500" fill="#9c9c9c"/><rect x="708.300" y="222.800" width="1.400" height="1.400" fill="#9c9c9c"/><rect x="715.600" y="222.800" width="1.400" height="1.400" fill="#9c9c9c"/>
<g transform="translate(706 250.3)"><path d="M4.200 .300L5.600 1.800 7.500 0 9.400 1.800 10.800 .300 10.200 2.600V5C12.500 6.200 15 9.500 15 12.200 15 13.800 14 14.600 12.500 14.600H2.500C1 14.600 0 13.800 0 12.200 0 9.500 2.500 6.200 5.800 5V2.600z" fill="#3fa540"/><path d="M1 10.200l3.600-4 1 .900-1.200 1.500v5H3V10z" fill="#e6d232"/><path d="M6.300 8h3.600v1.100H7.400v1.300h2.500v3.300H6.300v-1.100h2.500v-1.100H6.300z" fill="#f4f8f0"/><rect x="5.900" y="5.600" width="1.600" height="1.100" fill="#d8d04a"/></g>
<g fill="#222"><rect x="734.800" y="226.300" width="5.200" height="1.800"/><rect x="734.800" y="229.200" width="5.200" height="1"/><rect x="734.800" y="231" width="5.200" height="1.800"/><rect x="734.800" y="233.700" width="5.200" height="1"/><rect x="734.800" y="235.600" width="5.200" height="1.700"/><rect x="732.800" y="226.600" width="1.100" height="1.100"/><rect x="732.800" y="231.400" width="1.100" height="1.100"/><rect x="732.800" y="236" width="1.100" height="1.100"/></g>
<path d="M117.100 133.600L116.300 144.500L81.200 613" stroke="#000" stroke-width="2.500" fill="none" stroke-linejoin="round"/><path d="M116.400 141.500l-.300 5" stroke="#000" stroke-width="3.300"/>
<path d="M80.4 629.5L72.8 610.8L90.6 612.2z" fill="#000"/>
</svg>
</div>
</body></html>
